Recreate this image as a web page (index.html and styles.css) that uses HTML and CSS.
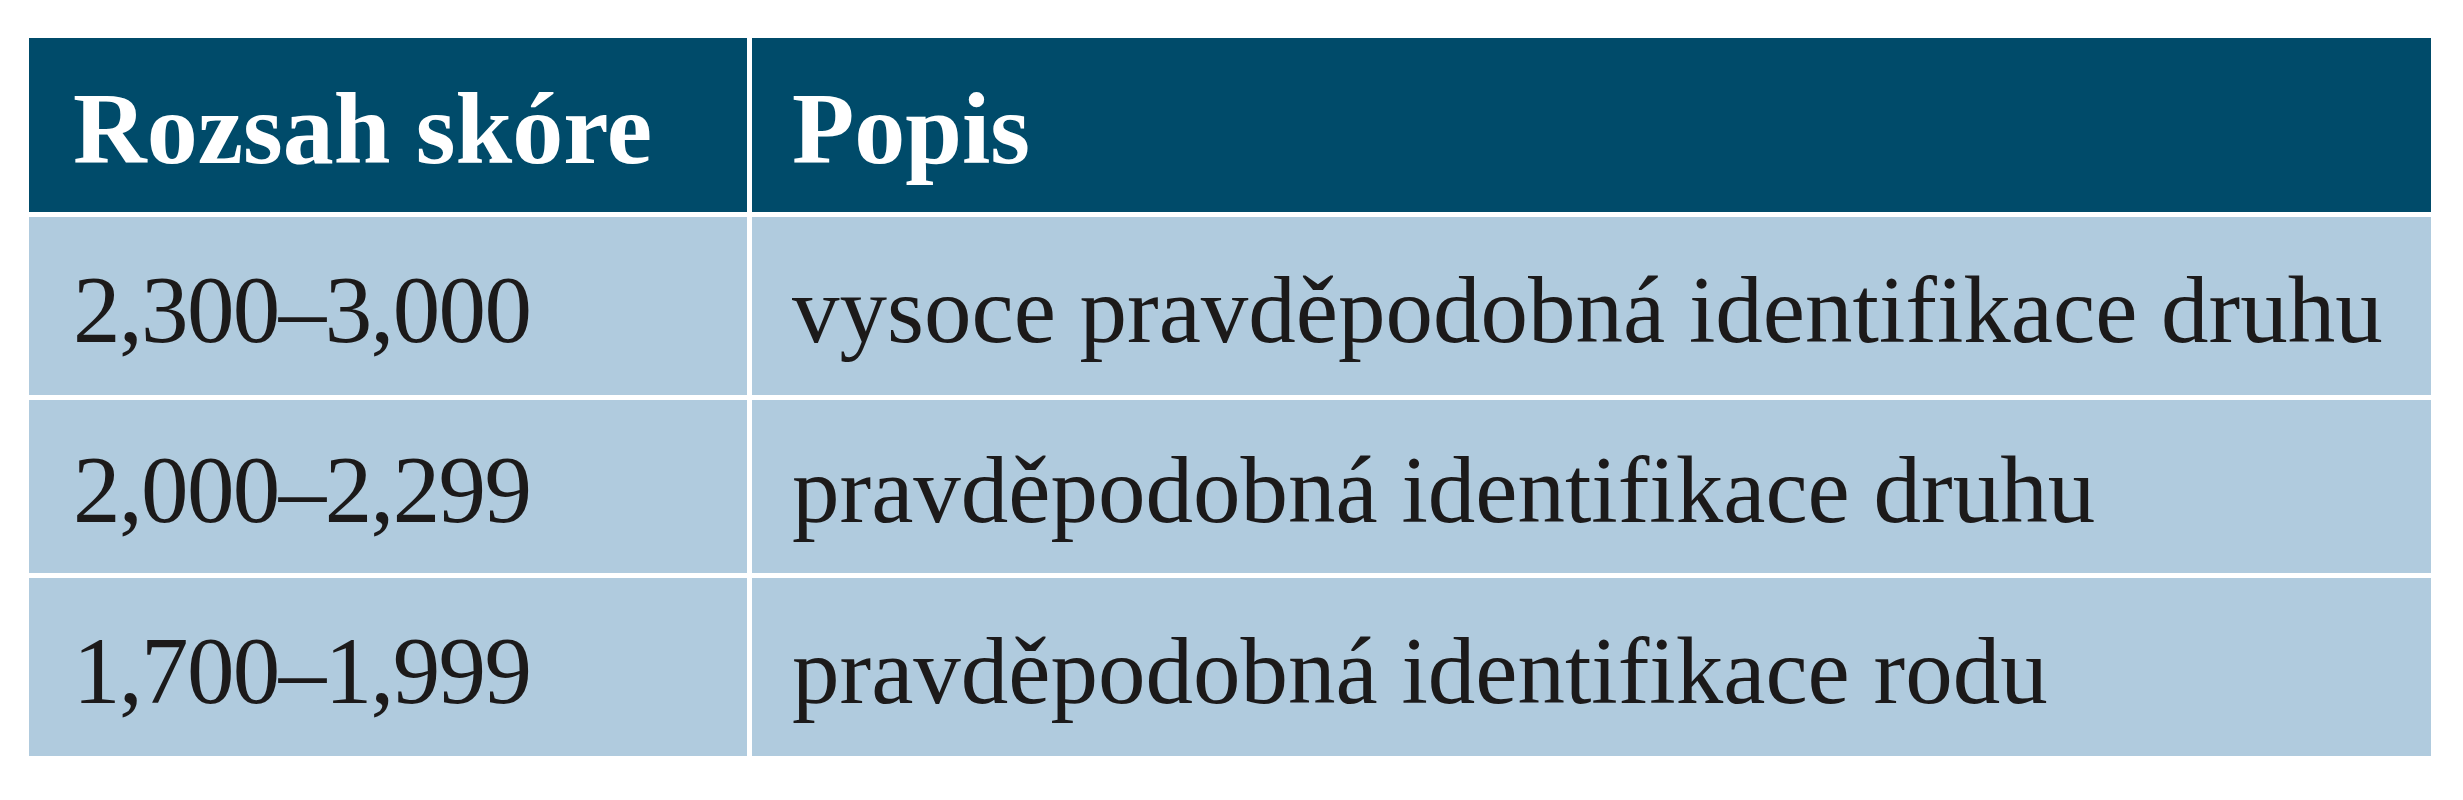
FILE: index.html
```html
<!DOCTYPE html>
<html lang="cs">
<head>
<meta charset="utf-8">
<title>Rozsah skóre</title>
<link rel="stylesheet" href="styles.css">
</head>
<body>
<div class="score-table" role="table">
  <div class="cell head" role="columnheader">Rozsah skóre</div>
  <div class="cell head" role="columnheader">Popis</div>
  <div class="cell body num" role="cell">2,300–3,000</div>
  <div class="cell body" role="cell">vysoce pravděpodobná identifikace druhu</div>
  <div class="cell body num" role="cell">2,000–2,299</div>
  <div class="cell body" role="cell">pravděpodobná identifikace druhu</div>
  <div class="cell body num" role="cell">1,700–1,999</div>
  <div class="cell body" role="cell">pravděpodobná identifikace rodu</div>
</div>
</body>
</html>
```

FILE: styles.css
```css
html, body {
  margin: 0;
  padding: 0;
  background: #ffffff;
}

body {
  font-family: "Liberation Serif", "Times New Roman", serif;
  width: 2463px;
  height: 800px;
  overflow: hidden;
}

.score-table {
  display: grid;
  grid-template-columns: 718px 1679px;
  grid-template-rows: 174px 178px 173px 178px;
  gap: 5px;
  margin: 38px 0 0 29px;
  width: 2402px;
}

.cell {
  display: flex;
  align-items: center;
  padding: 8px 0 0 44px;
  box-sizing: border-box;
  line-height: 1;
  white-space: nowrap;
}

.cell:nth-child(even) {
  padding-left: 40px;
}

.head {
  background: #004b6a;
  color: #ffffff;
  font-weight: bold;
  font-size: 102px;
}

.body {
  background: #b0cbde;
  color: #1c1a1a;
  font-size: 95px;
}

.num {
  letter-spacing: -1.6px;
}
```
